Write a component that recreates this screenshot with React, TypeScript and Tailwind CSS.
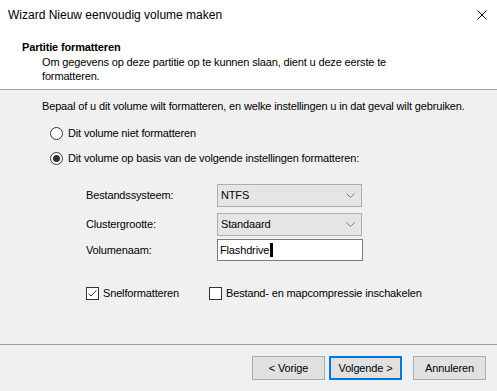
import { useState } from "react";

function Radio({ checked }: { checked?: boolean }) {
  return (
    <span className="flex h-[13px] w-[13px] shrink-0 items-center justify-center rounded-full border border-[#333333] bg-white">
      {checked && <span className="h-[7px] w-[7px] rounded-full bg-[#333333]" />}
    </span>
  );
}

function Checkbox({ checked }: { checked?: boolean }) {
  return (
    <span className="flex h-[13px] w-[13px] shrink-0 items-center justify-center border border-[#333333] bg-white">
      {checked && (
        <svg width="11" height="11" viewBox="0 0 11 11" fill="none">
          <path d="M1.5 5.5 L4 8 L9.5 2.5" stroke="#333333" strokeWidth="1" />
        </svg>
      )}
    </span>
  );
}

function Select({ value }: { value: string }) {
  return (
    <div className="flex h-[23px] w-[145px] items-center justify-between border border-[#adadad] bg-[#e5e5e5] pl-[3px] pr-[6px]">
      <span>{value}</span>
      <svg width="9" height="6" viewBox="0 0 9 6" fill="none">
        <path d="M0.5 0.5 L4.5 4.5 L8.5 0.5" stroke="#7a7a7a" strokeWidth="1" />
      </svg>
    </div>
  );
}

function Button({ label, focused, className }: { label: string; focused?: boolean; className?: string }) {
  return (
    <button
      type="button"
      className={
        (focused
          ? "h-[24px] w-[73px] border-2 border-[#0078d7] bg-[#e1e1e1] text-[#000] "
          : "h-[24px] w-[73px] border border-[#adadad] bg-[#e1e1e1] text-[#000] ") + (className ?? "")
      }
    >
      {label}
    </button>
  );
}

export default function App() {
  const [name] = useState("Flashdrive");

  return (
    <div className="flex h-[391px] w-[497px] flex-col bg-[#f0f0f0] font-['Liberation_Sans',Arial,sans-serif] text-[11px] leading-[15px] tracking-[-0.15px] text-black">
      <div className="h-[89px] shrink-0 bg-white">
        <div className="flex h-[30px] items-center justify-between pl-[8px] pr-[10px] text-[12px] tracking-normal">
          <span>Wizard Nieuw eenvoudig volume maken</span>
          <svg width="10" height="10" viewBox="0 0 10 10" fill="none">
            <path d="M0.5 0.5 L9.5 9.5 M9.5 0.5 L0.5 9.5" stroke="#111" strokeWidth="1" />
          </svg>
        </div>
        <div className="pl-[22px] pt-[10px]">
          <div className="font-bold">Partitie formatteren</div>
          <div className="pl-[20px] leading-[14px]">
            Om gegevens op deze partitie op te kunnen slaan, dient u deze eerste te
            <br />
            formatteren.
          </div>
        </div>
      </div>
      <div className="h-px shrink-0 bg-[#a0a0a0]" />
      <div className="flex flex-1 flex-col pl-[42px] pt-[9px]">
        <div className="whitespace-nowrap">
          Bepaal of u dit volume wilt formatteren, en welke instellingen u in dat geval wilt gebruiken.
        </div>
        <div className="mt-[12px] flex items-center gap-[5px] pl-[8px]">
          <Radio />
          <span>Dit volume niet formatteren</span>
        </div>
        <div className="mt-[10px] flex items-center gap-[5px] pl-[8px]">
          <Radio checked />
          <span>Dit volume op basis van de volgende instellingen formatteren:</span>
        </div>
        <div className="mt-[18px] flex flex-col pl-[44px]">
          <div className="flex items-center">
            <span className="w-[131px]">Bestandssysteem:</span>
            <Select value="NTFS" />
          </div>
          <div className="mt-[6px] flex items-center">
            <span className="w-[131px]">Clustergrootte:</span>
            <Select value="Standaard" />
          </div>
          <div className="mt-[3px] flex items-center">
            <span className="w-[131px]">Volumenaam:</span>
            <div className="flex h-[22px] w-[146px] items-center border border-[#7a7a7a] bg-white pl-[2px]">
              <span>{name}</span>
              <span className="ml-px h-[14px] w-[3px] bg-black" />
            </div>
          </div>
        </div>
        <div className="mt-[25px] flex items-center pl-[44px]">
          <span className="flex w-[123px] items-center">
            <Checkbox checked />
            <span className="ml-[4px]">Snelformatteren</span>
          </span>
          <span className="flex items-center">
            <Checkbox />
            <span className="ml-[4px]">Bestand- en mapcompressie inschakelen</span>
          </span>
        </div>
      </div>
      <div className="h-px shrink-0 bg-[#a0a0a0]" />
      <div className="flex h-[46px] shrink-0 items-center justify-end pr-[11px]">
        <Button label="< Vorige" />
        <Button label="Volgende >" focused className="ml-[4px]" />
        <Button label="Annuleren" className="ml-[11px]" />
      </div>
    </div>
  );
}
